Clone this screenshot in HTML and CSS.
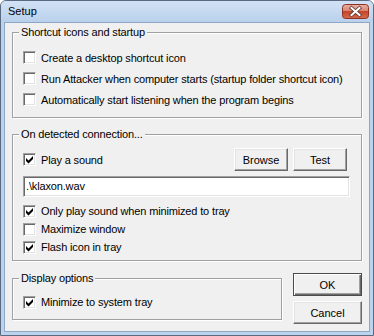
FILE: index.html
```html
<!DOCTYPE html>
<html lang="en">
<head>
    <meta charset="UTF-8">
    <title>Setup</title>
    <link rel="stylesheet" href="styles.css">
</head>
<body>
    <div class="window">
        <div class="titlebar">
            <span class="title">Setup</span>
            <svg class="close" width="27" height="15" viewBox="0 0 27 15">
                <defs>
                    <linearGradient id="closeGrad" x1="0" y1="0" x2="0" y2="1">
                        <stop offset="0" stop-color="#eab0a2"/>
                        <stop offset="0.45" stop-color="#d98672"/>
                        <stop offset="0.5" stop-color="#c5452c"/>
                        <stop offset="1" stop-color="#d86a4c"/>
                    </linearGradient>
                </defs>
                <rect x="0.5" y="0.5" width="26" height="14" rx="3" fill="url(#closeGrad)" stroke="#8e3324"/>
                <path d="M9.5 4 L17.5 11 M17.5 4 L9.5 11" stroke="#5a3530" stroke-width="3.6" stroke-linecap="square"/>
                <path d="M9.5 4 L17.5 11 M17.5 4 L9.5 11" stroke="#ffffff" stroke-width="2" stroke-linecap="square"/>
            </svg>
        </div>

        <div class="client">
            <fieldset class="group group-startup">
                <legend>Shortcut icons and startup</legend>
                <div class="group-body">
                    <label class="check"><span class="box"></span>Create a desktop shortcut icon</label>
                    <label class="check"><span class="box"></span>Run Attacker when computer starts (startup folder shortcut icon)</label>
                    <label class="check"><span class="box"></span>Automatically start listening when the program begins</label>
                </div>
            </fieldset>

            <fieldset class="group group-connection">
                <legend>On detected connection...</legend>
                <div class="group-body">
                    <div class="sound-row">
                        <label class="check">
                            <span class="box"><svg viewBox="0 0 11 11" width="11" height="11"><polygon points="2,4 4.5,6.5 9,2 9,5 4.5,9.5 2,7"/></svg></span>Play a sound
                        </label>
                        <div class="sound-buttons">
                            <button class="btn btn-small">Browse</button>
                            <button class="btn btn-small">Test</button>
                        </div>
                    </div>
                    <div class="textbox">.\klaxon.wav</div>
                    <div class="check-list">
                        <label class="check short"><span class="box"><svg viewBox="0 0 11 11" width="11" height="11"><polygon points="2,4 4.5,6.5 9,2 9,5 4.5,9.5 2,7"/></svg></span>Only play sound when minimized to tray</label>
                        <label class="check short"><span class="box"></span>Maximize window</label>
                        <label class="check short"><span class="box"><svg viewBox="0 0 11 11" width="11" height="11"><polygon points="2,4 4.5,6.5 9,2 9,5 4.5,9.5 2,7"/></svg></span>Flash icon in tray</label>
                    </div>
                </div>
            </fieldset>

            <div class="bottom-row">
                <fieldset class="group group-display">
                    <legend>Display options</legend>
                    <div class="group-body">
                        <label class="check short"><span class="box"><svg viewBox="0 0 11 11" width="11" height="11"><polygon points="2,4 4.5,6.5 9,2 9,5 4.5,9.5 2,7"/></svg></span>Minimize to system tray</label>
                    </div>
                </fieldset>
                <div class="dialog-buttons">
                    <button class="btn btn-default">OK</button>
                    <button class="btn">Cancel</button>
                </div>
            </div>
        </div>
    </div>
</body>
</html>
```

FILE: styles.css
```css
* {
    box-sizing: border-box;
}

body {
    margin: 0;
    font-family: "Liberation Sans", Arial, sans-serif;
    font-size: 11px;
    letter-spacing: -0.15px;
    color: #000;
    background: #fff;
}

.window {
    width: 374px;
    height: 336px;
    border: 1px solid #5a6a80;
    border-radius: 6px 6px 0 0;
    background: #bcd3ee;
    display: flex;
    flex-direction: column;
    overflow: hidden;
}

.titlebar {
    height: 21px;
    display: flex;
    justify-content: space-between;
    align-items: flex-start;
    padding-left: 7px;
    background: linear-gradient(#d2e2f5, #b9d0ec);
}

.title {
    line-height: 21px;
    font-size: 11px;
    letter-spacing: 0;
}

.close {
    display: block;
    margin-top: 3px;
    margin-right: 4px;
}

.client {
    flex: 1;
    margin: 0 3px 3px;
    border: 1px solid #8ea7c6;
    background: #f0f0f0;
    padding: 0 6px 0 7px;
}

/* group boxes */
.group {
    margin: 0;
    padding: 0;
    width: 350px;
    min-width: 0;
    border: 1px solid #a0a0a0;
    box-shadow: 1px 1px 0 #fff, inset 1px 1px 0 #fff;
}

.group legend {
    margin-left: 6px;
    padding: 0 2px;
    line-height: 13px;
    background: #f0f0f0;
}

.group-startup {
    margin-top: 3px;
}

.group-startup .group-body {
    padding: 8px 10px 7px;
}

.group-connection {
    margin-top: 10px;
}

.group-connection .group-body {
    padding: 7px 11px 4px 10px;
}

.group-display {
    width: 270px;
}

.group-display .group-body {
    padding: 8px 10px 8px;
}

/* checkboxes */
.check {
    display: flex;
    align-items: center;
    gap: 5px;
    height: 21px;
    white-space: nowrap;
}

.check.short {
    height: 18px;
}

.box {
    width: 13px;
    height: 13px;
    flex: none;
    background: #fff;
    border: 1px solid;
    border-color: #a0a0a0 #fff #fff #a0a0a0;
    box-shadow: inset 1px 1px 0 #696969, inset -1px -1px 0 #e3e3e3;
}

.box svg {
    display: block;
}

.box polygon {
    fill: #000;
}

/* sound row */
.sound-row {
    display: flex;
    justify-content: space-between;
    align-items: center;
    height: 23px;
    padding-right: 3px;
}

.sound-buttons {
    display: flex;
    gap: 5px;
}

.textbox {
    margin-top: 5px;
    height: 21px;
    line-height: 19px;
    padding: 0 2px;
    background: #fff;
    border: 1px solid;
    border-color: #a0a0a0 #fff #fff #a0a0a0;
    box-shadow: inset 1px 1px 0 #696969, inset -1px -1px 0 #e3e3e3;
}

.check-list {
    margin-top: 5px;
}

/* buttons */
.btn {
    font: inherit;
    color: #000;
    height: 23px;
    width: 69px;
    padding: 0;
    background: #f0f0f0;
    border: 1px solid;
    border-color: #fff #696969 #696969 #fff;
    box-shadow: inset -1px -1px 0 #a0a0a0, inset 1px 1px 0 #e3e3e3;
}

.btn-small {
    width: 54px;
}

.btn-default {
    border: 1px solid #4a4a4a;
    box-shadow: inset 1px 1px 0 #fff, inset -1px -1px 0 #696969, inset -2px -2px 0 #a0a0a0;
}

.bottom-row {
    display: flex;
    align-items: flex-start;
    gap: 11px;
    margin-top: 11px;
}

.dialog-buttons {
    display: flex;
    flex-direction: column;
    gap: 5px;
    margin-top: 1px;
}
```
